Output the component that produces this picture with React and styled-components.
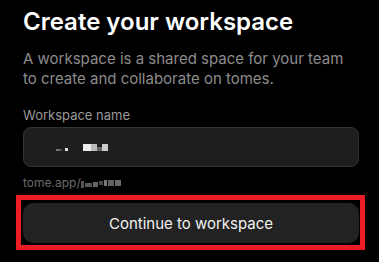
import React from "react";
import styled, { createGlobalStyle } from "styled-components";

const GlobalStyle = createGlobalStyle`
  html, body {
    margin: 0;
    padding: 0;
    background: #fff;
  }
  body {
    font-family: Inter, "Noto Sans", sans-serif;
  }
`;

const Page = styled.div`
  background: #000;
  height: 262px;
  padding: 7px 20px 0 23px;
  box-sizing: border-box;
  display: flex;
  flex-direction: column;
`;

const Title = styled.h1`
  margin: 0;
  font-size: 24px;
  line-height: 30px;
  font-weight: 600;
  color: #fff;
`;

const Lead = styled.p`
  margin: 12px 0 0;
  font-size: 15px;
  line-height: 20px;
  color: #8c8c8c;
`;

const Label = styled.label`
  margin-top: 18px;
  font-size: 13px;
  line-height: 16px;
  color: #9a9a9a;
`;

const Field = styled.div`
  margin-top: 4px;
  width: 336px;
  height: 40px;
  box-sizing: border-box;
  border: 1px solid #333;
  border-radius: 8px;
  background: #1e1e1e;
  display: flex;
  align-items: center;
  padding-left: 32px;
`;

// redacted value, shown as pixel blocks
const Pixels = styled.div`
  display: flex;
  align-items: ${(p) => p.align || "center"};
  gap: ${(p) => p.gap || 0}px;
`;

const Px = styled.span`
  display: block;
  width: ${(p) => p.w}px;
  height: ${(p) => p.h}px;
  background: ${(p) => p.c};
  margin-left: ${(p) => p.ml || 0}px;
  margin-top: ${(p) => p.mt || 0}px;
`;

const Hint = styled.div`
  margin-top: 8px;
  display: flex;
  align-items: center;
  font-size: 12px;
  line-height: 16px;
  color: #6b6b6b;
`;

const Highlight = styled.div`
  margin: 4px 0 0 -7px;
  width: 349px;
  height: 55px;
  box-sizing: border-box;
  border: 5px solid #ec1c24;
  padding: 3px 0 0 2px;
`;

const Button = styled.button`
  width: 336px;
  height: 40px;
  border: none;
  border-radius: 10px;
  background: #222;
  color: #f2f2f2;
  font-family: Inter, "Noto Sans", sans-serif;
  font-size: 15px;
  font-weight: 400;
  cursor: pointer;
`;

function App() {
  return (
    <>
      <GlobalStyle />
      <Page>
        <Title>Create your workspace</Title>
        <Lead>
          A workspace is a shared space for your team
          <br />
          to create and collaborate on tomes.
        </Lead>
        <Label>Workspace name</Label>
        <Field>
          <Pixels align="flex-end">
            <Px w={3} h={2} c="#777" />
            <Px w={3} h={2} c="#555" mt={2} />
            <Px w={3} h={3} c="#ddd" ml={3} />
            <Px w={8} h={7} c="#eee" ml={15} />
            <Px w={6} h={7} c="#bbb" />
            <Px w={5} h={4} c="#666" />
            <Px w={6} h={7} c="#ccc" />
          </Pixels>
        </Field>
        <Hint>
          tome.app/
          <Pixels gap={1}>
            <Px w={3} h={7} c="#555" mt={2} />
            <Px w={7} h={4} c="#5a5a5a" mt={3} />
            <Px w={5} h={5} c="#666" mt={2} />
            <Px w={4} h={4} c="#4a4a4a" />
            <Px w={3} h={6} c="#777" />
            <Px w={6} h={6} c="#606060" />
            <Px w={6} h={6} c="#6a6a6a" />
          </Pixels>
        </Hint>
        <Highlight>
          <Button type="button">Continue to workspace</Button>
        </Highlight>
      </Page>
    </>
  );
}

export default App;
